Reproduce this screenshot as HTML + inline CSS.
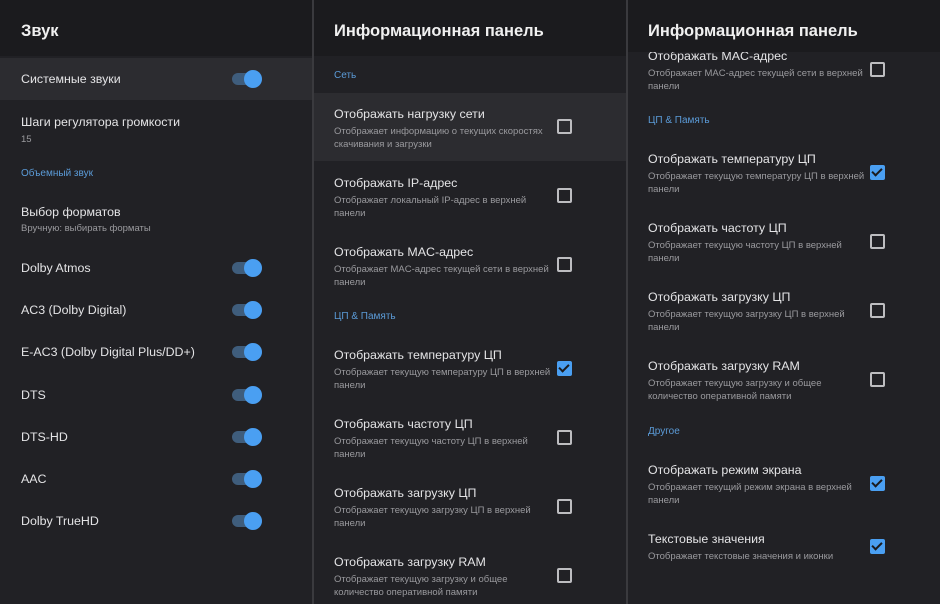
<!DOCTYPE html><html><head><meta charset="utf-8"><style>
*{margin:0;padding:0;box-sizing:border-box}
body{width:940px;height:604px;background:#202024;font-family:"Liberation Sans","DejaVu Sans",sans-serif;position:relative;overflow:hidden;color:#e6e6e8}
.p{position:absolute;top:0;height:604px;background:#212125;overflow:hidden}
.hd{position:absolute;left:0;right:0;top:0;height:56px;background:#1b1b1e}
.h{position:absolute;font-size:16.5px;font-weight:bold;color:#f0f0f0;line-height:22px}
.t{position:absolute;font-size:12.4px;line-height:16px;color:#e4e4e6;white-space:nowrap}
.s{position:absolute;font-size:9.5px;line-height:13px;color:#9a9a9e;width:220px}
.c{position:absolute;font-size:10px;line-height:12px;color:#5b9bd8}
.hl{position:absolute;left:0;right:0;background:#2c2c30}
.tg{position:absolute;width:30px;height:12px;border-radius:6px;background:#3f5d7c}
.tg:after{content:"";position:absolute;right:0;top:-3px;width:18px;height:18px;border-radius:50%;background:#4a9ff2}
.cb{position:absolute;width:15px;height:15px;border:2px solid #bdbdc0;border-radius:2px}
.ck{position:absolute;width:15px;height:15px;background:#4a9ff2;border-radius:2px}
.ck:after{content:"";position:absolute;left:4px;top:1px;width:4px;height:8px;border:solid #1b1b1e;border-width:0 2px 2px 0;transform:rotate(45deg)}
.ln{position:absolute;top:0;width:2px;height:604px;background:#3a3a3e}
</style></head><body>
<div class="p" style="left:0;width:312px">
<div class="hd"></div><div class="h" style="left:21px;top:20px">Звук</div>
<div class="hl" style="top:58px;height:42px"></div>
<div class="t" style="left:21px;top:71px">Системные звуки</div><div class="tg" style="left:232px;top:73px"></div>
<div class="t" style="left:21px;top:114px">Шаги регулятора громкости</div><div class="s" style="left:21px;top:133px">15</div>
<div class="c" style="left:21px;top:168px">Объемный звук</div>
<div class="t" style="left:21px;top:204px">Выбор форматов</div><div class="s" style="left:21px;top:222px">Вручную: выбирать форматы</div>
<div class="t" style="left:21px;top:260px">Dolby Atmos</div><div class="tg" style="left:232px;top:262px"></div>
<div class="t" style="left:21px;top:302px">AC3 (Dolby Digital)</div><div class="tg" style="left:232px;top:304px"></div>
<div class="t" style="left:21px;top:344px">E-AC3 (Dolby Digital Plus/DD+)</div><div class="tg" style="left:232px;top:346px"></div>
<div class="t" style="left:21px;top:387px">DTS</div><div class="tg" style="left:232px;top:389px"></div>
<div class="t" style="left:21px;top:429px">DTS-HD</div><div class="tg" style="left:232px;top:431px"></div>
<div class="t" style="left:21px;top:471px">AAC</div><div class="tg" style="left:232px;top:473px"></div>
<div class="t" style="left:21px;top:513px">Dolby TrueHD</div><div class="tg" style="left:232px;top:515px"></div>
</div>
<div class="ln" style="left:312px"></div>
<div class="p" style="left:314px;width:312px">
<div class="hd"></div><div class="h" style="left:20px;top:20px">Информационная панель</div>
<div class="c" style="left:20px;top:70px">Сеть</div>
<div class="hl" style="top:93px;height:68px"></div>
<div class="t" style="left:20px;top:106px">Отображать нагрузку сети</div><div class="s" style="left:20px;top:125px">Отображает информацию о текущих скоростях скачивания и загрузки</div><div class="cb" style="left:243px;top:119px"></div>
<div class="t" style="left:20px;top:175px">Отображать IP-адрес</div><div class="s" style="left:20px;top:194px">Отображает локальный IP-адрес в верхней панели</div><div class="cb" style="left:243px;top:188px"></div>
<div class="t" style="left:20px;top:244px">Отображать MAC-адрес</div><div class="s" style="left:20px;top:263px">Отображает MAC-адрес текущей сети в верхней панели</div><div class="cb" style="left:243px;top:257px"></div>
<div class="c" style="left:20px;top:311px">ЦП &amp; Память</div>
<div class="t" style="left:20px;top:347px">Отображать температуру ЦП</div><div class="s" style="left:20px;top:366px">Отображает текущую температуру ЦП в верхней панели</div><div class="ck" style="left:243px;top:361px"></div>
<div class="t" style="left:20px;top:416px">Отображать частоту ЦП</div><div class="s" style="left:20px;top:435px">Отображает текущую частоту ЦП в верхней панели</div><div class="cb" style="left:243px;top:430px"></div>
<div class="t" style="left:20px;top:485px">Отображать загрузку ЦП</div><div class="s" style="left:20px;top:504px">Отображает текущую загрузку ЦП в верхней панели</div><div class="cb" style="left:243px;top:499px"></div>
<div class="t" style="left:20px;top:554px">Отображать загрузку RAM</div><div class="s" style="left:20px;top:573px">Отображает текущую загрузку и общее количество оперативной памяти</div><div class="cb" style="left:243px;top:568px"></div>
</div>
<div class="ln" style="left:626px"></div>
<div class="p" style="left:628px;width:312px">
<div class="t" style="left:20px;top:48px">Отображать MAC-адрес</div>
<div class="hd" style="height:52px"></div><div class="h" style="left:20px;top:20px">Информационная панель</div>
<div class="s" style="left:20px;top:67px">Отображает MAC-адрес текущей сети в верхней панели</div><div class="cb" style="left:242px;top:62px"></div>
<div class="c" style="left:20px;top:115px">ЦП &amp; Память</div>
<div class="t" style="left:20px;top:151px">Отображать температуру ЦП</div><div class="s" style="left:20px;top:170px">Отображает текущую температуру ЦП в верхней панели</div><div class="ck" style="left:242px;top:165px"></div>
<div class="t" style="left:20px;top:220px">Отображать частоту ЦП</div><div class="s" style="left:20px;top:239px">Отображает текущую частоту ЦП в верхней панели</div><div class="cb" style="left:242px;top:234px"></div>
<div class="t" style="left:20px;top:289px">Отображать загрузку ЦП</div><div class="s" style="left:20px;top:308px">Отображает текущую загрузку ЦП в верхней панели</div><div class="cb" style="left:242px;top:303px"></div>
<div class="t" style="left:20px;top:358px">Отображать загрузку RAM</div><div class="s" style="left:20px;top:377px">Отображает текущую загрузку и общее количество оперативной памяти</div><div class="cb" style="left:242px;top:372px"></div>
<div class="c" style="left:20px;top:426px">Другое</div>
<div class="t" style="left:20px;top:462px">Отображать режим экрана</div><div class="s" style="left:20px;top:481px">Отображает текущий режим экрана в верхней панели</div><div class="ck" style="left:242px;top:476px"></div>
<div class="t" style="left:20px;top:531px">Текстовые значения</div><div class="s" style="left:20px;top:550px">Отображает текстовые значения и иконки</div><div class="ck" style="left:242px;top:539px"></div>
</div>
</body></html>
